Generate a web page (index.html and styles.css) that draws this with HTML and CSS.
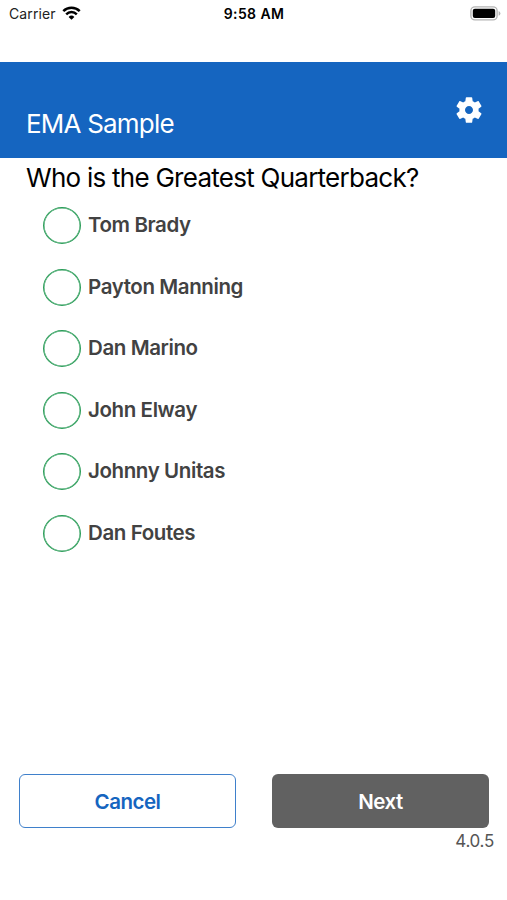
FILE: index.html
```html
<!DOCTYPE html>
<html lang="en">
<head>
  <meta charset="UTF-8" />
  <meta name="viewport" content="width=device-width, initial-scale=1.0" />
  <title>EMA Sample</title>
  <link rel="stylesheet" href="styles.css">
</head>
<body>
  <!-- Status bar -->
  <div class="status-bar">
    <div class="carrier">
      <span>Carrier</span>
      <svg class="wifi" width="19" height="14" viewBox="0 0 18 14" fill="none" stroke="#000" stroke-width="2.5">
        <path d="M0.8 5.1 A11.6 11.6 0 0 1 17.2 5.1" />
        <path d="M3.7 8.3 A7.5 7.5 0 0 1 14.3 8.3" />
        <path d="M9 13.8 L6.1 10.9 A4.1 4.1 0 0 1 11.9 10.9 Z" fill="#000" stroke="none" />
      </svg>
    </div>
    <div class="time">9:58 AM</div>
    <div class="battery">
      <svg width="31" height="15" viewBox="0 0 31 15">
        <rect x="0.9" y="0.9" width="26.2" height="13" rx="4" fill="#fff" stroke="#b4b4b4" stroke-width="1.4" />
        <rect x="2.8" y="2.8" width="22.4" height="9.2" rx="2" fill="#000" />
        <path d="M28.6 5 Q30.4 5.8 30.4 7.4 Q30.4 9 28.6 9.8 Z" fill="#b4b4b4" />
      </svg>
    </div>
  </div>

  <header class="header">
    <h1>EMA Sample</h1>
    <button class="settings" aria-label="Settings">
      <svg width="32" height="32" viewBox="0 0 24 24" fill="#fff">
        <path d="M19.14 12.94c.04-.3.06-.61.06-.94 0-.32-.02-.64-.07-.94l2.03-1.58c.18-.14.23-.41.12-.61l-1.92-3.32c-.12-.22-.37-.29-.59-.22l-2.39.96c-.5-.38-1.03-.7-1.62-.94l-.36-2.54c-.04-.24-.24-.41-.48-.41h-3.84c-.24 0-.43.17-.47.41l-.36 2.54c-.59.24-1.13.57-1.62.94l-2.39-.96c-.22-.08-.47 0-.59.22L2.74 8.87c-.12.21-.08.47.12.61l2.03 1.58c-.05.3-.09.63-.09.94s.02.64.07.94l-2.03 1.58c-.18.14-.23.41-.12.61l1.92 3.32c.12.22.37.29.59.22l2.39-.96c.5.38 1.03.7 1.62.94l.36 2.54c.05.24.24.41.48.41h3.84c.24 0 .44-.17.47-.41l.36-2.54c.59-.24 1.13-.56 1.62-.94l2.39.96c.22.08.47 0 .59-.22l1.92-3.32c.12-.22.07-.47-.12-.61l-2.01-1.58zM12 15c-1.65 0-3-1.35-3-3s1.35-3 3-3 3 1.35 3 3-1.35 3-3 3z" />
      </svg>
    </button>
  </header>

  <main class="content">
    <h2 class="question">Who is the Greatest Quarterback?</h2>
    <div class="options">
      <label class="option"><input type="radio" name="quarterback"><span>Tom Brady</span></label>
      <label class="option"><input type="radio" name="quarterback"><span>Payton Manning</span></label>
      <label class="option"><input type="radio" name="quarterback"><span>Dan Marino</span></label>
      <label class="option"><input type="radio" name="quarterback"><span>John Elway</span></label>
      <label class="option"><input type="radio" name="quarterback"><span>Johnny Unitas</span></label>
      <label class="option"><input type="radio" name="quarterback"><span>Dan Foutes</span></label>
    </div>
  </main>

  <footer class="footer">
    <div class="buttons">
      <button class="btn cancel">Cancel</button>
      <button class="btn next">Next</button>
    </div>
    <div class="version">4.0.5</div>
  </footer>
</body>
</html>
```
FILE: styles.css
```css
* {
  box-sizing: border-box;
}
body {
  font-family: Inter, "Liberation Sans", sans-serif;
  background-color: #fff;
  color: #000;
  margin: 0;
  height: 900px;
  overflow: hidden;
  display: flex;
  flex-direction: column;
}
button {
  font-family: inherit;
  cursor: pointer;
}
.status-bar {
  display: grid;
  grid-template-columns: 1fr auto 1fr;
  align-items: start;
  height: 62px;
  padding: 5px 8px 0 9px;
  font-size: 14px;
  line-height: 18px;
}
.carrier {
  display: flex;
  gap: 6px;
  color: #222;
  letter-spacing: 0.1px;
}
.wifi {
  margin-top: 1px;
}
.time {
  font-weight: 600;
  letter-spacing: 0.4px;
}
.battery {
  display: flex;
  justify-content: flex-end;
  margin-right: -2px;
  padding-top: 1px;
}
.header {
  display: flex;
  justify-content: space-between;
  height: 96px;
  padding: 32px 22px 0 26px;
  background-color: #1565c0;
  color: #fff;
}
.header h1 {
  margin: 14px 0 0;
  font-size: 26px;
  font-weight: 400;
  line-height: 32px;
  letter-spacing: -0.8px;
}
.settings {
  width: 32px;
  height: 32px;
  padding: 0;
  background: none;
  border: none;
}
.content {
  flex: 1;
}
.question {
  margin: 4px 0 0 26px;
  font-size: 26px;
  font-weight: 400;
  line-height: 32px;
  letter-spacing: -0.74px;
}
.options {
  display: flex;
  flex-direction: column;
  gap: 24.5px;
  margin: 13px 0 0 43px;
}
.option {
  display: flex;
  align-items: center;
  gap: 7px;
  height: 37px;
  color: #424242;
  font-size: 20.5px;
  font-weight: 600;
  line-height: 24px;
  letter-spacing: -0.4px;
}
.option span {
  margin-top: -1px;
}
.option input {
  appearance: none;
  width: 38px;
  height: 37px;
  margin: 0;
  border: 1px solid #2e9e5b;
  border-radius: 50%;
  box-shadow: inset 0 0 0 0.5px #2e9e5b;
}
.option input:checked {
  background-color: #2e9e5b;
}
.footer {
  height: 126px;
  padding: 0 18px 0 19px;
}
.buttons {
  display: grid;
  grid-template-columns: 1fr 1fr;
  gap: 36px;
}
.btn {
  height: 54px;
  border-radius: 6px;
  font-size: 20.5px;
  font-weight: 600;
  letter-spacing: -0.5px;
}
.cancel {
  background-color: #fff;
  border: 1px solid #3f80cb;
  color: #1565c0;
}
.next {
  background-color: #616161;
  border: none;
  color: #fff;
}
.version {
  margin: 3px -5px 0 0;
  color: #555;
  font-size: 17px;
  line-height: 20px;
  letter-spacing: -0.3px;
  text-align: right;
}
```
